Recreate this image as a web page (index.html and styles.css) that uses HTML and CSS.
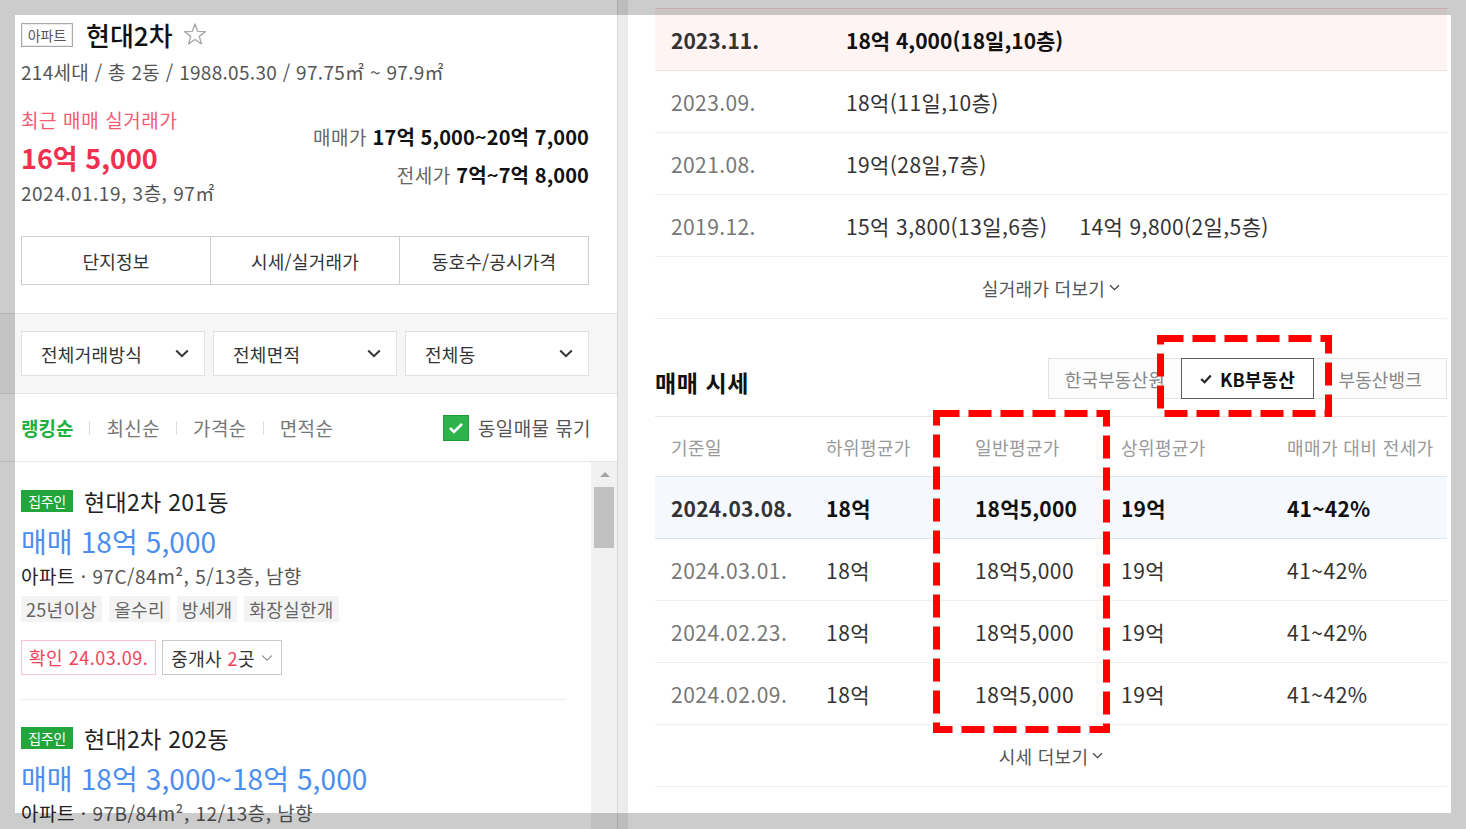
FILE: index.html
```html
<!DOCTYPE html>
<html lang="ko">
<head>
<meta charset="utf-8">
<title>현대2차</title>
<link rel="stylesheet" href="styles.css">
</head>
<body>
<div class="page">
  <aside class="left">
    <section class="head">
      <div class="title-row">
        <span class="type-tag">아파트</span>
        <h1 class="complex-name">현대2차</h1>
        <svg class="star" width="26" height="26" viewBox="0 0 26 26"><polygon points="13,2 15.65,9.36 23.46,9.6 17.28,14.39 19.47,21.9 13,17.5 6.53,21.9 8.72,14.39 2.54,9.6 10.35,9.36" fill="none" stroke="#a9a9a9" stroke-width="1.4" stroke-linejoin="round"/></svg>
      </div>
      <p class="complex-meta">214세대 / 총 2동 / 1988.05.30 / 97.75㎡ ~ 97.9㎡</p>
      <div class="price-block">
        <div class="recent">
          <p class="recent-label">최근 매매 실거래가</p>
          <p class="recent-price">16억 5,000</p>
          <p class="recent-info">2024.01.19, 3층, 97㎡</p>
        </div>
        <div class="ranges">
          <p class="range"><span class="range-label">매매가</span> <b>17억 5,000~20억 7,000</b></p>
          <p class="range"><span class="range-label">전세가</span> <b>7억~7억 8,000</b></p>
        </div>
      </div>
      <div class="tabs">
        <button class="tab">단지정보</button>
        <button class="tab">시세/실거래가</button>
        <button class="tab">동호수/공시가격</button>
      </div>
    </section>

    <section class="filters">
      <div class="select"><span>전체거래방식</span><svg width="14" height="9" viewBox="0 0 14 9"><path d="M1.2 1.5 L7 7.2 L12.8 1.5" fill="none" stroke="#333" stroke-width="2"/></svg></div>
      <div class="select"><span>전체면적</span><svg width="14" height="9" viewBox="0 0 14 9"><path d="M1.2 1.5 L7 7.2 L12.8 1.5" fill="none" stroke="#333" stroke-width="2"/></svg></div>
      <div class="select"><span>전체동</span><svg width="14" height="9" viewBox="0 0 14 9"><path d="M1.2 1.5 L7 7.2 L12.8 1.5" fill="none" stroke="#333" stroke-width="2"/></svg></div>
    </section>

    <section class="sort-bar">
      <span class="sort on">랭킹순</span>
      <i class="sep"></i>
      <span class="sort">최신순</span>
      <i class="sep"></i>
      <span class="sort">가격순</span>
      <i class="sep"></i>
      <span class="sort">면적순</span>
      <label class="group-check">
        <span class="checkbox"><svg width="16" height="12" viewBox="0 0 16 12"><path d="M2 6 L6 10 L14 2" fill="none" stroke="#fff" stroke-width="2.6"/></svg></span>
        <span>동일매물 묶기</span>
      </label>
    </section>

    <div class="list-wrap">
      <div class="list">
        <article class="item">
          <div class="item-head"><span class="badge">집주인</span><h2 class="item-title">현대2차 201동</h2></div>
          <p class="item-price">매매 18억 5,000</p>
          <p class="item-info"><span class="kind">아파트</span> · 97C/84m², 5/13층, 남향</p>
          <div class="tags"><span class="tag">25년이상</span><span class="tag">올수리</span><span class="tag">방세개</span><span class="tag">화장실한개</span></div>
          <div class="confirm-row">
            <span class="confirm">확인 24.03.09.</span>
            <span class="agent"><span>중개사 <em>2</em>곳</span><svg width="12" height="8" viewBox="0 0 12 8"><path d="M1 1.5 L6 6.2 L11 1.5" fill="none" stroke="#999" stroke-width="1.3"/></svg></span>
          </div>
        </article>
        <article class="item">
          <div class="item-head"><span class="badge">집주인</span><h2 class="item-title">현대2차 202동</h2></div>
          <p class="item-price">매매 18억 3,000~18억 5,000</p>
          <p class="item-info"><span class="kind">아파트</span> · 97B/84m², 12/13층, 남향</p>
        </article>
      </div>
      <div class="scrollbar">
        <span class="sb-arrow"></span>
        <span class="sb-thumb"></span>
      </div>
    </div>
  </aside>

  <div class="divider"></div>

  <main class="right">
    <div class="deals">
      <div class="deal hl"><span class="d-date">2023.11.</span><span class="d-val">18억 4,000(18일,10층)</span></div>
      <div class="deal"><span class="d-date">2023.09.</span><span class="d-val">18억(11일,10층)</span></div>
      <div class="deal"><span class="d-date">2021.08.</span><span class="d-val">19억(28일,7층)</span></div>
      <div class="deal"><span class="d-date">2019.12.</span><span class="d-val">15억 3,800(13일,6층)</span><span class="d-val d-extra">14억 9,800(2일,5층)</span></div>
      <div class="more">실거래가 더보기<svg width="11" height="7" viewBox="0 0 11 7"><path d="M1 1.2 L5.5 5.6 L10 1.2" fill="none" stroke="#444" stroke-width="1.3"/></svg></div>
    </div>

    <div class="quote-head">
      <h3 class="quote-title">매매 시세</h3>
      <div class="sources">
        <span class="src">한국부동산원</span>
        <span class="src on"><svg width="12" height="10" viewBox="0 0 12 10"><path d="M1.2 5 L4.6 8.2 L10.8 1.5" fill="none" stroke="#222" stroke-width="2.2"/></svg>KB부동산</span>
        <span class="src">부동산뱅크</span>
      </div>
    </div>

    <div class="quote-table">
      <div class="trow thead"><span>기준일</span><span>하위평균가</span><span>일반평균가</span><span>상위평균가</span><span>매매가 대비 전세가</span></div>
      <div class="trow hl"><span class="t-date">2024.03.08.</span><span>18억</span><span>18억5,000</span><span>19억</span><span>41~42%</span></div>
      <div class="trow"><span class="t-date">2024.03.01.</span><span>18억</span><span>18억5,000</span><span>19억</span><span>41~42%</span></div>
      <div class="trow"><span class="t-date">2024.02.23.</span><span>18억</span><span>18억5,000</span><span>19억</span><span>41~42%</span></div>
      <div class="trow"><span class="t-date">2024.02.09.</span><span>18억</span><span>18억5,000</span><span>19억</span><span>41~42%</span></div>
      <div class="more">시세 더보기<svg width="11" height="7" viewBox="0 0 11 7"><path d="M1 1.2 L5.5 5.6 L10 1.2" fill="none" stroke="#444" stroke-width="1.3"/></svg></div>
    </div>
  </main>
</div>

<svg class="annot" width="1466" height="829" viewBox="0 0 1466 829">
  <rect x="1160.5" y="338.5" width="168" height="75" fill="none" stroke="#ff0000" stroke-width="7" stroke-dasharray="23 9"/>
  <rect x="936.5" y="413.5" width="170" height="316" fill="none" stroke="#ff0000" stroke-width="7" stroke-dasharray="23 9"/>
</svg>
<div class="frame"></div>
</body>
</html>
```

FILE: styles.css
```css
* { box-sizing: border-box; margin: 0; padding: 0; }
html, body { width: 1466px; height: 829px; overflow: hidden; }
body {
  font-family: "Noto Sans CJK KR", "Noto Sans", sans-serif;
  color: #333;
  background: #fff;
  position: relative;
}
button { font: inherit; color: inherit; background: none; border: none; }
em { font-style: normal; }

.page { display: flex; height: 829px; }

/* ---------- left panel ---------- */
.left {
  width: 618px;
  flex-shrink: 0;
  border-right: 1px solid #d6d6d6;
  display: flex;
  flex-direction: column;
  height: 829px;
}
.divider { width: 10px; flex-shrink: 0; background: #ececec; }

.head {
  padding: 22px 28px 28px 21px;
  border-bottom: 1px solid #e4e4e4;
}
.title-row { display: flex; align-items: center; height: 26px; }
.type-tag {
  width: 52px; height: 24px;
  border: 1px solid #a9a9a9;
  box-shadow: inset 0 0 0 1px #ececec;
  font-size: 14px; line-height: 22px;
  color: #555; text-align: center;
}
.complex-name {
  margin-left: 13px;
  font-size: 26px; line-height: 26px;
  font-weight: 500; color: #111;
  letter-spacing: 0;
}
.star { margin-left: 9px; }
.complex-meta {
  margin-top: 12px;
  font-size: 19px; line-height: 24px;
  color: #555; letter-spacing: 0.3px;
}
.price-block { display: flex; justify-content: space-between; margin-top: 24px; }
.recent-label { font-size: 19px; line-height: 24px; color: #f45a73; letter-spacing: 0.6px; }
.recent-price {
  margin-top: 8px;
  font-size: 27px; line-height: 36px;
  font-weight: 700; color: #f0304e; letter-spacing: 0;
}
.recent-info { margin-top: 5px; font-size: 19px; line-height: 24px; color: #555; letter-spacing: 0.5px; }
.ranges {
  margin-top: 15px;
  display: flex; flex-direction: column; align-items: flex-end; gap: 10px;
}
.range { font-size: 20px; line-height: 28px; color: #111; letter-spacing: 0.1px; }
.range-label { font-size: 19px; color: #666; letter-spacing: 0.5px; }
.range b { font-weight: 700; }

.tabs {
  margin-top: 31px;
  display: flex; height: 49px;
  border: 1px solid #cfcfcf;
}
.tab {
  flex: 1;
  font-size: 18px; color: #333;
  border-left: 1px solid #cfcfcf;
  letter-spacing: 0.2px;
}
.tab:first-child { border-left: none; }

.filters {
  display: flex; gap: 8px;
  padding: 17px 28px 17px 21px;
  background: #f6f6f6;
  border-bottom: 1px solid #e4e4e4;
}
.select {
  flex: 1; height: 45px;
  background: #fff;
  border: 1px solid #e1e1e1;
  display: flex; align-items: center; justify-content: space-between;
  padding: 0 15px 0 19px;
  font-size: 18px; color: #333; letter-spacing: 0.3px;
}

.sort-bar {
  height: 68px; flex-shrink: 0;
  display: flex; align-items: center;
  padding: 0 26px 0 21px;
  border-bottom: 1px solid #e8e8e8;
}
.sort { font-size: 19px; line-height: 24px; color: #777; letter-spacing: 0.4px; }
.sort.on { color: #1eb13f; font-weight: 700; letter-spacing: 0; }
.sep { width: 1px; height: 14px; background: #dcdcdc; margin: 0 16px; }
.group-check {
  margin-left: auto;
  display: flex; align-items: center; gap: 9px;
  font-size: 19px; color: #555; letter-spacing: 0.4px;
}
.checkbox {
  width: 26px; height: 26px;
  background: #2db34a; border: 1px solid #229a3b;
  display: flex; align-items: center; justify-content: center;
}

.list-wrap { flex: 1; display: flex; overflow: hidden; }
.list { flex: 1; padding: 26px 25px 0 21px; }
.item { padding-bottom: 24px; border-bottom: 1px solid #ececec; margin-bottom: 25px; }
.item:last-child { border-bottom: none; }
.item-head { display: flex; align-items: center; height: 26px; }
.badge {
  width: 52px; height: 22px;
  background: #23a53c; color: #fff;
  font-size: 14px; line-height: 22px; text-align: center;
  letter-spacing: -0.3px;
}
.item-title { margin-left: 11px; font-size: 23px; line-height: 26px; font-weight: 400; color: #222; letter-spacing: 0.3px; }
.item-price { margin-top: 9px; font-size: 28px; line-height: 36px; color: #4a8ef0; letter-spacing: 0.1px; }
.item-info { margin-top: 5px; font-size: 19px; line-height: 24px; color: #555; letter-spacing: 0.5px; }
.kind { color: #222; }
.tags { margin-top: 8px; display: flex; gap: 7px; }
.tag {
  height: 26px; padding: 0 5px;
  background: #f3f3f3;
  font-size: 18px; line-height: 26px; color: #666; letter-spacing: 0.3px;
}
.confirm-row { margin-top: 18px; display: flex; gap: 6px; }
.confirm {
  height: 35px; padding: 0 7px;
  border: 1px solid #f8c3cb;
  font-size: 18px; line-height: 33px; color: #f0435a; letter-spacing: 0.5px;
}
.agent {
  height: 35px; padding: 0 8px;
  border: 1px solid #c9c9c9;
  display: flex; align-items: center; gap: 6px;
  font-size: 18px; color: #333; letter-spacing: 0.4px;
}
.agent em { color: #f0435a; }

.scrollbar { width: 26px; flex-shrink: 0; background: #f1f1f1; position: relative; }
.sb-arrow {
  position: absolute; left: 9px; top: 10px;
  width: 0; height: 0;
  border-left: 5px solid transparent; border-right: 5px solid transparent;
  border-bottom: 5px solid #a3a3a3;
}
.sb-thumb { position: absolute; left: 3px; top: 25px; width: 20px; height: 61px; background: #c1c1c1; }

/* ---------- right panel ---------- */
.right { flex: 1; padding: 8px 19px 0 27px; }
.deal {
  display: flex; align-items: center;
  height: 62px;
  border-bottom: 1px solid #efefef;
  font-size: 21px; letter-spacing: 0.4px;
}
.deal.hl {
  height: 63px;
  background: #fff4f4;
  border-top: 1px solid #f6d8d8;
  border-bottom: 1px solid #fbdede;
}
.d-date { width: 191px; padding-left: 16px; color: #777; }
.d-val { color: #333; }
.d-extra { margin-left: 32px; }
.deal.hl .d-date { color: #333; font-weight: 700; letter-spacing: 0; }
.deal.hl .d-val { color: #111; font-weight: 700; letter-spacing: 0; }
.more {
  height: 62px;
  display: flex; align-items: center; justify-content: center; gap: 4px;
  border-bottom: 1px solid #efefef;
  font-size: 18px; color: #555; letter-spacing: 0.3px;
}

.quote-head {
  margin-top: 39px;
  height: 41px;
  display: flex; align-items: flex-end; justify-content: space-between;
}
.quote-title { font-size: 23px; line-height: 30px; margin-bottom: 2px; font-weight: 700; color: #111; letter-spacing: 0.6px; }
.sources {
  width: 399px; height: 41px;
  display: flex;
  border: 1px solid #e2e2e2;
  background: #fcfcfc;
}
.src {
  flex: 1;
  display: flex; align-items: center; justify-content: center; gap: 8px;
  font-size: 18px; color: #888; letter-spacing: 0.1px;
}
.src.on {
  margin: -1px 0;
  border: 1px solid #5c5c5c;
  background: #fff;
  color: #111; font-weight: 700;
}

.quote-table { margin-top: 17px; }
.trow {
  display: grid;
  grid-template-columns: 155px 149px 146px 166px 1fr;
  align-items: center;
  height: 62px;
  border-bottom: 1px solid #efefef;
  font-size: 21px; color: #333; letter-spacing: 0.5px;
}
.trow > span { padding-left: 16px; white-space: nowrap; }
.trow .t-date { color: #777; }
.thead {
  height: 61px;
  border-top: 1px solid #e6e6e6;
  border-bottom: 1px solid #dde6ef;
  font-size: 18px; color: #999; letter-spacing: 0.4px;
}
.trow.hl {
  background: #f5f9fd;
  border-bottom: 1px solid #dde6ef;
  font-weight: 700; color: #111; letter-spacing: 0.2px;
}
.trow.hl .t-date { color: #333; }

/* ---------- overlays ---------- */
.annot { position: absolute; left: 0; top: 0; pointer-events: none; }
.frame {
  position: absolute; inset: 0;
  border-style: solid;
  border-color: rgba(0, 0, 0, 0.2);
  border-width: 15px 15px 16px 15px;
  pointer-events: none;
}
```
